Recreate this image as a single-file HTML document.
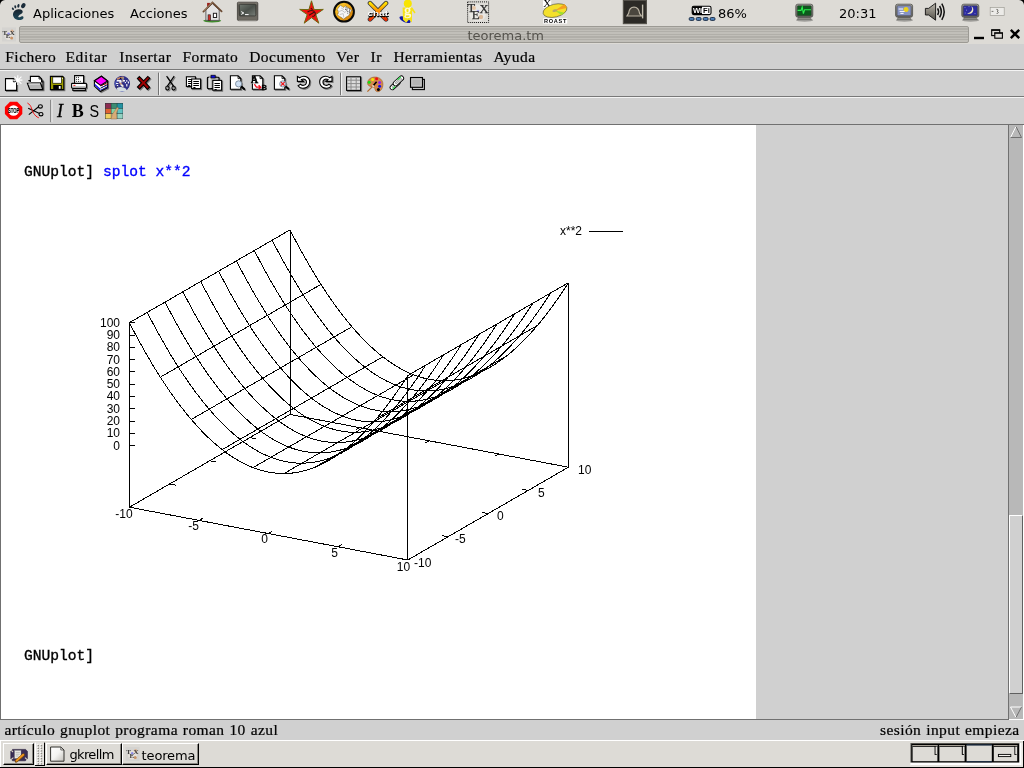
<!DOCTYPE html><html lang="es"><head><meta charset="utf-8"><title>teorema.tm</title><style>
*{margin:0;padding:0;box-sizing:border-box}
html,body{width:1024px;height:768px;overflow:hidden;background:#d0d0d0}
body{position:relative;font-family:"DejaVu Sans",sans-serif;font-size:13px;color:#000}
#w{position:absolute;left:0;top:0;width:1024px;height:768px;will-change:transform;overflow:hidden}
.a{position:absolute}
.t{position:absolute;white-space:pre;line-height:1}
#panel{left:0;top:0;width:1024px;height:44px;background:#dddbd6}
#stripes{left:19px;top:26px;width:950px;height:17px;border-radius:2px;border:1px solid #9c9a94;
 background:repeating-linear-gradient(to bottom,#c1bfb9 0,#c1bfb9 1.3px,#b1afa9 1.4px,#b1afa9 2.6px,#c1bfb9 2.67px)}
.serif{font-family:"Liberation Serif",serif;font-size:15.5px;-webkit-text-stroke:0.22px #000}
.mono{font-family:"Liberation Mono",monospace;font-size:14.6px}
.hl{position:absolute;left:0;width:1024px;height:1px}
#doc{left:1px;top:125px;width:755px;height:594px;background:#fff}
#sbar{left:1009px;top:125px;width:14px;height:594px;background:#b8b8b8}
#thumb{left:1009px;top:515px;width:14px;height:179px;background:#d0d0d0;border-top:1px solid #fff;border-left:1px solid #fff;border-right:1px solid #606060;border-bottom:1px solid #606060}
#bpanel{left:0;top:740px;width:1024px;height:28px;background:#dddbd6;border-top:1px solid #fff}
.btn{position:absolute;top:743px;height:22px;background:#dddbd6;border-top:1px solid #fff;border-left:1px solid #fff;border-right:1px solid #000;border-bottom:1px solid #000;box-shadow:inset -1px -1px 0 #8a8882}
</style></head><body><div id="w">
<div class="a" id="panel"></div>
<div class="t" style="left:33px;top:7px">Aplicaciones</div>
<div class="t" style="left:130px;top:7px">Acciones</div>
<div class="t" style="left:718px;top:7px">86%</div>
<div class="t" style="left:839px;top:7px">20:31</div>
<div class="a" id="stripes"></div>
<div class="t" style="left:467.4px;top:28.8px;color:#55534d">teorema.tm</div>
<div class="t serif" style="left:5.2px;top:48.5px;letter-spacing:0.53px">Fichero</div>
<div class="t serif" style="left:65.4px;top:48.5px;letter-spacing:0.7px">Editar</div>
<div class="t serif" style="left:119.2px;top:48.5px;letter-spacing:0.61px">Insertar</div>
<div class="t serif" style="left:182.4px;top:48.5px;letter-spacing:0.49px">Formato</div>
<div class="t serif" style="left:249.2px;top:48.5px;letter-spacing:0.48px">Documento</div>
<div class="t serif" style="left:336px;top:48.5px;letter-spacing:0.7px">Ver</div>
<div class="t serif" style="left:370.4px;top:48.5px;letter-spacing:0.7px">Ir</div>
<div class="t serif" style="left:393.4px;top:48.5px;letter-spacing:0.46px">Herramientas</div>
<div class="t serif" style="left:493.4px;top:48.5px;letter-spacing:0.45px">Ayuda</div>
<div class="hl" style="top:69px;background:#787878"></div><div class="hl" style="top:70px;background:#f4f4f4"></div>
<div class="hl" style="top:96px;background:#787878"></div><div class="hl" style="top:97px;background:#f4f4f4"></div>
<div class="hl" style="top:124px;background:#707070"></div>
<div class="a" style="left:0;top:125px;width:1px;height:594px;background:#707070"></div>
<div class="a" id="doc"></div>
<div class="t mono" style="left:24px;top:165px"><b style="font-weight:normal;-webkit-text-stroke:0.35px #000">GNUplot]</b></div>
<div class="t mono" style="left:103px;top:165px;color:#0000ff;-webkit-text-stroke:0.35px #0000ff">splot x**2</div>
<div class="t mono" style="left:24px;top:649px;-webkit-text-stroke:0.35px #000">GNUplot]</div>
<svg class="a" style="left:0;top:125px" width="756" height="594" viewBox="0 125 756 594"><path d="M129.4 507.2L407.8 560M407.8 560L568.4 467.2M568.4 467.2L290 414.4M290 414.4L129.4 507.2M129.4 507.2L129.4 322.7M407.8 560L407.8 375.5M568.4 467.2L568.4 282.7M290 414.4L290 229.9M129.4 322.7L290 229.9M160.3 377.2L320.9 284.4M191.3 419.5L351.9 326.7M222.2 449.6L382.8 356.8M253.1 467.6L413.7 374.8M284.1 473.5L444.7 380.7M315 467.2L475.6 374.4M345.9 448.8L506.5 356M376.9 418.2L537.5 325.4M407.8 375.5L568.4 282.7M129.4 322.7L134 331.6L138.7 340.3L143.3 348.7L148 356.8L152.6 364.7L157.2 372.3L161.9 379.6L166.5 386.6L171.2 393.4L175.8 399.8L180.4 406L185.1 412L189.7 417.6L194.4 423L199 428.1L203.6 433L208.3 437.6L212.9 441.9L217.6 445.9L222.2 449.6L226.8 453.1L231.5 456.3L236.1 459.2L240.8 461.9L245.4 464.3L250 466.4L254.7 468.2L259.3 469.8L264 471.1L268.6 472.1L273.2 472.8L277.9 473.3L282.5 473.5L287.2 473.4L291.8 473.1L296.4 472.5L301.1 471.6L305.7 470.4L310.4 468.9L315 467.2L319.6 465.2L324.3 463L328.9 460.4L333.6 457.6L338.2 454.5L342.8 451.2L347.5 447.6L352.1 443.7L356.8 439.5L361.4 435L366 430.3L370.7 425.3L375.3 420L380 414.5L384.6 408.7L389.2 402.6L393.9 396.2L398.5 389.6L403.2 382.7L407.8 375.5M147.2 312.4L151.9 321.3L156.5 330L161.2 338.4L165.8 346.5L170.4 354.4L175.1 361.9L179.7 369.3L184.4 376.3L189 383L193.6 389.5L198.3 395.7L202.9 401.7L207.6 407.3L212.2 412.7L216.8 417.8L221.5 422.7L226.1 427.3L230.8 431.5L235.4 435.6L240 439.3L244.7 442.8L249.3 446L254 448.9L258.6 451.6L263.2 454L267.9 456.1L272.5 457.9L277.2 459.5L281.8 460.8L286.4 461.8L291.1 462.5L295.7 463L300.4 463.2L305 463.1L309.6 462.8L314.3 462.1L318.9 461.3L323.6 460.1L328.2 458.6L332.8 456.9L337.5 454.9L342.1 452.7L346.8 450.1L351.4 447.3L356 444.2L360.7 440.9L365.3 437.3L370 433.3L374.6 429.2L379.2 424.7L383.9 420L388.5 415L393.2 409.7L397.8 404.2L402.4 398.4L407.1 392.3L411.7 385.9L416.4 379.3L421 372.4L425.6 365.2M165.1 302.1L169.7 311L174.4 319.7L179 328.1L183.6 336.2L188.3 344.1L192.9 351.6L197.6 358.9L202.2 366L206.8 372.7L211.5 379.2L216.1 385.4L220.8 391.4L225.4 397L230 402.4L234.7 407.5L239.3 412.4L244 416.9L248.6 421.2L253.2 425.3L257.9 429L262.5 432.5L267.2 435.7L271.8 438.6L276.4 441.3L281.1 443.7L285.7 445.8L290.4 447.6L295 449.2L299.6 450.5L304.3 451.5L308.9 452.2L313.6 452.7L318.2 452.9L322.8 452.8L327.5 452.5L332.1 451.8L336.8 450.9L341.4 449.8L346 448.3L350.7 446.6L355.3 444.6L360 442.4L364.6 439.8L369.2 437L373.9 433.9L378.5 430.6L383.2 426.9L387.8 423L392.4 418.9L397.1 414.4L401.7 409.7L406.4 404.7L411 399.4L415.6 393.9L420.3 388.1L424.9 382L429.6 375.6L434.2 369L438.8 362.1L443.5 354.9M182.9 291.8L187.6 300.7L192.2 309.4L196.9 317.8L201.5 325.9L206.1 333.7L210.8 341.3L215.4 348.6L220.1 355.7L224.7 362.4L229.3 368.9L234 375.1L238.6 381L243.3 386.7L247.9 392.1L252.5 397.2L257.2 402.1L261.8 406.6L266.5 410.9L271.1 414.9L275.7 418.7L280.4 422.2L285 425.4L289.7 428.3L294.3 431L298.9 433.4L303.6 435.5L308.2 437.3L312.9 438.9L317.5 440.2L322.1 441.2L326.8 441.9L331.4 442.4L336.1 442.6L340.7 442.5L345.3 442.1L350 441.5L354.6 440.6L359.3 439.5L363.9 438L368.5 436.3L373.2 434.3L377.8 432L382.5 429.5L387.1 426.7L391.7 423.6L396.4 420.3L401 416.6L405.7 412.7L410.3 408.6L414.9 404.1L419.6 399.4L424.2 394.4L428.9 389.1L433.5 383.6L438.1 377.8L442.8 371.7L447.4 365.3L452.1 358.7L456.7 351.8L461.3 344.6M200.8 281.5L205.4 290.4L210.1 299.1L214.7 307.5L219.3 315.6L224 323.4L228.6 331L233.3 338.3L237.9 345.3L242.5 352.1L247.2 358.6L251.8 364.8L256.5 370.7L261.1 376.4L265.7 381.8L270.4 386.9L275 391.7L279.7 396.3L284.3 400.6L288.9 404.6L293.6 408.4L298.2 411.9L302.9 415.1L307.5 418L312.1 420.7L316.8 423L321.4 425.1L326.1 427L330.7 428.5L335.3 429.8L340 430.9L344.6 431.6L349.3 432.1L353.9 432.3L358.5 432.2L363.2 431.8L367.8 431.2L372.5 430.3L377.1 429.1L381.7 427.7L386.4 426L391 424L395.7 421.7L400.3 419.2L404.9 416.4L409.6 413.3L414.2 409.9L418.9 406.3L423.5 402.4L428.1 398.2L432.8 393.8L437.4 389.1L442.1 384.1L446.7 378.8L451.3 373.3L456 367.4L460.6 361.3L465.3 355L469.9 348.3L474.5 341.4L479.2 334.3M218.6 271.1L223.3 280.1L227.9 288.8L232.5 297.2L237.2 305.3L241.8 313.1L246.5 320.7L251.1 328L255.7 335L260.4 341.8L265 348.3L269.7 354.5L274.3 360.4L278.9 366.1L283.6 371.5L288.2 376.6L292.9 381.4L297.5 386L302.1 390.3L306.8 394.3L311.4 398.1L316.1 401.6L320.7 404.8L325.3 407.7L330 410.3L334.6 412.7L339.3 414.8L343.9 416.7L348.5 418.2L353.2 419.5L357.8 420.5L362.5 421.3L367.1 421.8L371.7 422L376.4 421.9L381 421.5L385.7 420.9L390.3 420L394.9 418.8L399.6 417.4L404.2 415.7L408.9 413.7L413.5 411.4L418.1 408.9L422.8 406.1L427.4 403L432.1 399.6L436.7 396L441.3 392.1L446 387.9L450.6 383.5L455.3 378.8L459.9 373.8L464.5 368.5L469.2 362.9L473.8 357.1L478.5 351L483.1 344.7L487.7 338L492.4 331.1L497 323.9M236.5 260.8L241.1 269.8L245.7 278.4L250.4 286.8L255 295L259.7 302.8L264.3 310.4L268.9 317.7L273.6 324.7L278.2 331.5L282.9 338L287.5 344.2L292.1 350.1L296.8 355.8L301.4 361.2L306.1 366.3L310.7 371.1L315.3 375.7L320 380L324.6 384L329.3 387.8L333.9 391.2L338.5 394.4L343.2 397.4L347.8 400L352.5 402.4L357.1 404.5L361.7 406.4L366.4 407.9L371 409.2L375.7 410.2L380.3 411L384.9 411.4L389.6 411.6L394.2 411.6L398.9 411.2L403.5 410.6L408.1 409.7L412.8 408.5L417.4 407.1L422.1 405.4L426.7 403.4L431.3 401.1L436 398.6L440.6 395.8L445.3 392.7L449.9 389.3L454.5 385.7L459.2 381.8L463.8 377.6L468.5 373.2L473.1 368.4L477.7 363.4L482.4 358.2L487 352.6L491.7 346.8L496.3 340.7L500.9 334.4L505.6 327.7L510.2 320.8L514.9 313.6M254.3 250.5L259 259.5L263.6 268.1L268.2 276.5L272.9 284.7L277.5 292.5L282.2 300.1L286.8 307.4L291.4 314.4L296.1 321.2L300.7 327.7L305.4 333.9L310 339.8L314.6 345.5L319.3 350.9L323.9 356L328.6 360.8L333.2 365.4L337.8 369.7L342.5 373.7L347.1 377.5L351.8 380.9L356.4 384.1L361 387.1L365.7 389.7L370.3 392.1L375 394.2L379.6 396.1L384.2 397.6L388.9 398.9L393.5 399.9L398.2 400.7L402.8 401.1L407.4 401.3L412.1 401.3L416.7 400.9L421.4 400.3L426 399.4L430.6 398.2L435.3 396.8L439.9 395.1L444.6 393.1L449.2 390.8L453.8 388.3L458.5 385.5L463.1 382.4L467.8 379L472.4 375.4L477 371.5L481.7 367.3L486.3 362.9L491 358.1L495.6 353.1L500.2 347.9L504.9 342.3L509.5 336.5L514.2 330.4L518.8 324.1L523.4 317.4L528.1 310.5L532.7 303.3M272.2 240.2L276.8 249.2L281.4 257.8L286.1 266.2L290.7 274.3L295.4 282.2L300 289.8L304.6 297.1L309.3 304.1L313.9 310.9L318.6 317.3L323.2 323.6L327.8 329.5L332.5 335.2L337.1 340.5L341.8 345.7L346.4 350.5L351 355.1L355.7 359.4L360.3 363.4L365 367.1L369.6 370.6L374.2 373.8L378.9 376.8L383.5 379.4L388.2 381.8L392.8 383.9L397.4 385.7L402.1 387.3L406.7 388.6L411.4 389.6L416 390.4L420.6 390.8L425.3 391L429.9 390.9L434.6 390.6L439.2 390L443.8 389.1L448.5 387.9L453.1 386.5L457.8 384.7L462.4 382.8L467 380.5L471.7 378L476.3 375.1L481 372.1L485.6 368.7L490.2 365.1L494.9 361.2L499.5 357L504.2 352.5L508.8 347.8L513.4 342.8L518.1 337.6L522.7 332L527.4 326.2L532 320.1L536.6 313.7L541.3 307.1L545.9 300.2L550.6 293M290 229.9L294.6 238.8L299.3 247.5L303.9 255.9L308.6 264L313.2 271.9L317.8 279.5L322.5 286.8L327.1 293.8L331.8 300.6L336.4 307L341 313.2L345.7 319.2L350.3 324.8L355 330.2L359.6 335.3L364.2 340.2L368.9 344.8L373.5 349.1L378.2 353.1L382.8 356.8L387.4 360.3L392.1 363.5L396.7 366.4L401.4 369.1L406 371.5L410.6 373.6L415.3 375.4L419.9 377L424.6 378.3L429.2 379.3L433.8 380L438.5 380.5L443.1 380.7L447.8 380.6L452.4 380.3L457 379.7L461.7 378.8L466.3 377.6L471 376.1L475.6 374.4L480.2 372.4L484.9 370.2L489.5 367.6L494.2 364.8L498.8 361.7L503.4 358.4L508.1 354.8L512.7 350.9L517.4 346.7L522 342.2L526.6 337.5L531.3 332.5L535.9 327.2L540.6 321.7L545.2 315.9L549.8 309.8L554.5 303.4L559.1 296.8L563.8 289.9L568.4 282.7M129.4 507.2L133 505.1M290 414.4L286.4 416.5M407.8 560L401.5 558.8M129.4 507.2L135.7 508.4M199 520.4L202.6 518.3M359.6 427.6L356 429.7M447.9 536.8L441.7 535.6M169.6 484L175.8 485.2M268.6 533.6L272.2 531.5M429.2 440.8L425.6 442.9M488.1 513.6L481.8 512.4M209.7 460.8L216 462M338.2 546.8L341.8 544.7M498.8 454L495.2 456.1M528.2 490.4L522 489.2M249.8 437.6L256.1 438.8M407.8 560L411.4 557.9M568.4 467.2L564.8 469.3M568.4 467.2L562.1 466M290 414.4L296.3 415.6M129.4 445.7L135.4 445.7M129.4 433.4L135.4 433.4M129.4 421.1L135.4 421.1M129.4 408.8L135.4 408.8M129.4 396.5L135.4 396.5M129.4 384.2L135.4 384.2M129.4 371.9L135.4 371.9M129.4 359.6L135.4 359.6M129.4 347.3L135.4 347.3M129.4 335L135.4 335M129.4 322.7L135.4 322.7M589 231L623 231" fill="none" stroke="#000" stroke-width="1" shape-rendering="crispEdges"/>
<g font-family="'Liberation Sans',sans-serif" font-size="12" fill="#000"><text x="120" y="449.6" text-anchor="end">0</text><text x="120" y="437.3" text-anchor="end">10</text><text x="120" y="425" text-anchor="end">20</text><text x="120" y="412.7" text-anchor="end">30</text><text x="120" y="400.4" text-anchor="end">40</text><text x="120" y="388.1" text-anchor="end">50</text><text x="120" y="375.8" text-anchor="end">60</text><text x="120" y="363.5" text-anchor="end">70</text><text x="120" y="351.2" text-anchor="end">80</text><text x="120" y="338.9" text-anchor="end">90</text><text x="120" y="326.6" text-anchor="end">100</text><text x="124" y="518.2" text-anchor="middle">-10</text><text x="193.5" y="530.2" text-anchor="middle">-5</text><text x="264.5" y="543.2" text-anchor="middle">0</text><text x="334.5" y="557.2" text-anchor="middle">5</text><text x="403.5" y="571.2" text-anchor="middle">10</text><text x="414" y="567.2">-10</text><text x="455" y="543.2">-5</text><text x="497" y="520.2">0</text><text x="538" y="497.2">5</text><text x="578" y="474.2">10</text><text x="560" y="235">x**2</text></g></svg>
<div class="a" style="left:1008px;top:125px;width:1px;height:594px;background:#707070"></div>
<div class="a" id="sbar"></div><div class="a" style="left:1023px;top:125px;width:1px;height:595px;background:#fff"></div>
<div class="a" id="thumb"></div>
<svg class="a" style="left:1009px;top:125px" width="14" height="594"><path d="M1.5 12.5L7 1.5" stroke="#fff" fill="none"/><path d="M7 1.5L12.5 12.5L1.5 12.5" stroke="#707070" fill="none"/><path d="M12.5 582L1.5 582L7 592.5" stroke="#fff" fill="none"/><path d="M7 592.5L12.5 582" stroke="#707070" fill="none"/></svg>
<div class="hl" style="top:719px;background:#707070;width:1009px"></div><div class="a" style="left:1009px;top:719px;width:15px;height:1px;background:#fff"></div>
<div class="t serif" style="left:4.4px;top:722.4px;letter-spacing:0.42px;word-spacing:0.6px">artículo gnuplot programa roman 10 azul</div>
<div class="t serif" style="right:4.4px;top:722.4px;letter-spacing:0.42px;word-spacing:0.6px">sesión input empieza</div>
<div class="a" id="bpanel"></div>
<div class="btn" style="left:3px;width:31px"></div>
<div class="btn" style="left:45.5px;width:76px"></div>
<div class="btn" style="left:121.8px;width:77.4px"></div>
<div class="t" style="left:69.4px;top:748.4px;letter-spacing:-0.62px">gkrellm</div>
<div class="t" style="left:141.6px;top:748.8px;letter-spacing:-0.15px">teorema</div>
<svg class="a" style="left:0;top:0;pointer-events:none" width="1024" height="768" viewBox="0 0 1024 768"><path d="M0 0H5Q0.5 0.5 0 5Z" fill="#000"/><path d="M1024 0H1019Q1023.5 0.5 1024 5Z" fill="#000"/><g fill="#1b2c3a"><ellipse cx="23.3" cy="5.6" rx="2" ry="2.7" transform="rotate(28 23.3 5.6)"/><ellipse cx="18.4" cy="5.8" rx="1.1" ry="1.9" transform="rotate(10 18.4 5.8)"/><ellipse cx="15.3" cy="6.8" rx="0.95" ry="1.6" transform="rotate(-12 15.3 6.8)"/><ellipse cx="12.9" cy="8.8" rx="0.9" ry="1.4" transform="rotate(-32 12.9 8.8)"/></g><defs><linearGradient id="gf" x1="0" y1="0" x2="0" y2="1"><stop offset="0" stop-color="#17222c"/><stop offset="1" stop-color="#1e4a5c"/></linearGradient></defs><path d="M18.2 9.2C21.5 8.9 23.3 10.6 22.6 12.6C22 14.3 19.2 14.6 18.4 16.2C17.9 17.3 19.2 17.7 20.3 16.9C21.5 16 23.4 16.1 23.5 17.4C23.6 19.2 20.8 20.3 18.3 20.1C14.9 19.8 12.8 17 13 14.1C13.2 11.3 15.4 9.4 18.2 9.2Z" fill="url(#gf)"/><ellipse cx="212.2" cy="20.8" rx="9" ry="1.6" fill="#3f8a2c"/><rect x="207.1" y="2.9" width="2.8" height="4.5" fill="#9c1f1a"/><path d="M205.9 20.4V10L212.4 3.6L219.2 10V20.4Z" fill="#e4e4e4" stroke="#555" stroke-width="0.9"/><path d="M203.4 11.6L212.4 2.6L221.6 11.4" fill="none" stroke="#6b4a33" stroke-width="1.8" stroke-linecap="round"/><path d="M203.6 11L212.4 2.2" fill="none" stroke="#c9a98c" stroke-width="0.7"/><rect x="208" y="14.8" width="2.6" height="5.6" fill="#c8302a" stroke="#222" stroke-width="0.6"/><rect x="213.4" y="13.3" width="3.2" height="4.2" fill="#fff" stroke="#222" stroke-width="1"/><defs><linearGradient id="tf" x1="0" y1="0" x2="0" y2="1"><stop offset="0" stop-color="#8c887e"/><stop offset="0.15" stop-color="#5f5c55"/><stop offset="1" stop-color="#6f6c64"/></linearGradient><linearGradient id="ts" x1="0" y1="0" x2="1" y2="1"><stop offset="0" stop-color="#707870"/><stop offset="0.5" stop-color="#4a504a"/><stop offset="1" stop-color="#7a807a"/></linearGradient></defs><rect x="237.4" y="2.2" width="20.4" height="18.2" rx="1" fill="url(#tf)" stroke="#3c3a36" stroke-width="0.8"/><rect x="239.4" y="4.3" width="16.4" height="11.6" rx="1" fill="url(#ts)" stroke="#2e2e2a" stroke-width="0.7"/><path d="M241.2 11.6L243.8 13L241.2 14.4M245 14.6H248.6" fill="none" stroke="#fff" stroke-width="1"/><rect x="238.6" y="20.4" width="18" height="1" fill="#a8a6a0"/><polygon points="311.5,0.8 314.1,9.6 323.3,9.4 315.8,14.6 318.8,23.2 311.5,17.7 304.2,23.2 307.2,14.6 299.7,9.4 308.9,9.6" fill="#f01010" stroke="#6e6a10" stroke-width="1"/><path d="M307.5 12.2C310 9.8 313.5 10 315 12.5C316 14.5 314.5 16.6 312.4 16.4M309 15.2L314.5 12M310.8 8.2L312.6 9.6" fill="none" stroke="#40100c" stroke-width="1.1"/><defs><linearGradient id="orb" x1="0" y1="0" x2="1" y2="1"><stop offset="0" stop-color="#ffd83a"/><stop offset="0.5" stop-color="#f0a818"/><stop offset="1" stop-color="#c87000"/></linearGradient></defs><circle cx="344" cy="11.7" r="9.9" fill="url(#orb)" stroke="#0a0a0a" stroke-width="2"/><path d="M337.3 9.4L340.3 5.2L343.75 7.5L345.3 5.9L351.6 10L348.75 15.6L346.9 16.6L343.75 19.1L337.5 15L338.6 12Z" fill="#f6f6f6" stroke="#3a3a30" stroke-width="0.6" stroke-dasharray="0.9 0.7"/><path d="M338.6 11.6L342 10.4L345 12.6L347.6 9M339.6 14.6L343.2 13.6L343.8 17.6M341.2 8L344 9.6" fill="none" stroke="#b8b8b8" stroke-width="0.8"/><path d="M345.6 7.4h.9m.9 .8h.9m-2.6 .9h.9m2.7 0h.9m-3.7 1h.9m1.8 .2h.9m-2.8 1.2h.9m1 .9h.9m-2.8 .8h.9M345 9.4h.9m2.9 2h.9" stroke="#2e2e2e" stroke-width="0.8" fill="none"/><defs><linearGradient id="xc" x1="0" y1="0" x2="0" y2="1"><stop offset="0" stop-color="#ffe000"/><stop offset="0.5" stop-color="#ff8c00"/><stop offset="1" stop-color="#ee2a00"/></linearGradient></defs><path d="M370 3.2L386 19.4M386 3.2L370 19.4" stroke="#3a3a3a" stroke-width="4.6" stroke-linecap="round" fill="none"/><path d="M370 3.2L386 19.4M386 3.2L370 19.4" stroke="url(#xc)" stroke-width="3" stroke-linecap="round" fill="none"/><text x="367.9" y="16.6" font-family="'Liberation Sans',sans-serif" font-size="7.2" font-weight="bold" fill="#000" stroke="#000" stroke-width="0.5" textLength="20.6" lengthAdjust="spacingAndGlyphs">chat</text><text x="367.4" y="15.6" font-family="'Liberation Sans',sans-serif" font-size="7.2" font-weight="bold" fill="#fff" textLength="20.6" lengthAdjust="spacingAndGlyphs">chat</text><ellipse cx="405" cy="19.6" rx="6" ry="2.6" fill="#1018a8" transform="rotate(25 405 19.6)"/><path d="M402.6 7.6H412.4L415.6 12.4L414.6 13.4L412 10.6V22.4L409 19.6L406.2 22.8L403 19.8Z" fill="#f6e218"/><circle cx="407.8" cy="3.6" r="4" fill="#f8e400"/><text x="404" y="14.6" font-family="'Liberation Serif',serif" font-size="14.5" fill="#fffbe0" stroke="#fffbe0" stroke-width="0.3">g</text><circle cx="477.6" cy="13" r="8.6" fill="#ecebe8" opacity="0.75"/><rect x="467.6" y="1.9" width="21" height="20.6" fill="none" stroke="#111" stroke-width="1" stroke-dasharray="1 1.05"/><circle cx="474" cy="8" r="2" fill="#e8c8a8"/><circle cx="481" cy="17" r="2.2" fill="#dcb898"/><circle cx="478" cy="11" r="1.3" fill="#a8a8f0"/><g font-family="'Liberation Serif',serif" fill="#2c2c2c" stroke="#2c2c2c" stroke-width="0.25"><text x="467.4" y="12.4" font-size="12.5">T</text><text x="471.8" y="18.8" font-size="13">E</text><text x="479.6" y="13.4" font-size="12.5">X</text></g><rect x="543" y="0" width="8.2" height="7.8" fill="#fff"/><text x="543.2" y="7.2" font-family="'Liberation Serif',serif" font-size="11" fill="#000">X</text><g transform="rotate(-14 555 10.6)"><ellipse cx="555" cy="10.6" rx="12.2" ry="6.4" fill="#f4e02c" stroke="#3a3a20" stroke-width="0.5"/><path d="M555 10.6L566 6.6L567 11Z" fill="#f6a020"/><path d="M555 10.6L560 16.4L564 15Z" fill="#a0e030"/><ellipse cx="555" cy="10.6" rx="2.6" ry="1.3" fill="#b8a868"/></g><rect x="543.2" y="18.2" width="24" height="5.4" fill="#fff"/><text x="544" y="23" font-family="'Liberation Sans',sans-serif" font-size="5.6" font-weight="bold" fill="#000" textLength="22.4" lengthAdjust="spacing">ROAST</text><rect x="623.4" y="0.2" width="23" height="23.4" fill="#2c2a26" stroke="#55534c" stroke-width="1.2"/><path d="M628.6 13.4C629.5 5.2 638.4 5 639.6 13.4L641.4 16H627Z" fill="#4a463e" stroke="#b9b2a2" stroke-width="1.2"/><path d="M642.6 4.6V18.4" stroke="#c4beb0" stroke-width="1.4"/><rect x="692.2" y="6.2" width="18.8" height="8.4" rx="1.6" fill="#fff" stroke="#000" stroke-width="1.1"/><path d="M693.8 6.2H702V14.6H693.8Q692.2 14.6 692.2 13V7.8Q692.2 6.2 693.8 6.2Z" fill="#000"/><text x="693" y="13.4" font-family="'Liberation Sans',sans-serif" font-size="7.6" font-weight="bold" fill="#fff">Wi</text><text x="703" y="13.4" font-family="'Liberation Sans',sans-serif" font-size="7.6" font-weight="bold" fill="#000">Fi</text><rect x="689.2" y="17.5" width="4.9" height="2.9" rx="1.2" fill="#4f82bc" stroke="#14243a" stroke-width="0.9"/><rect x="696.2" y="17.5" width="4.9" height="2.9" rx="1.2" fill="#4f82bc" stroke="#14243a" stroke-width="0.9"/><rect x="703.2" y="17.5" width="4.9" height="2.9" rx="1.2" fill="#4f82bc" stroke="#14243a" stroke-width="0.9"/><rect x="710.1" y="17.5" width="4.9" height="2.9" rx="1.2" fill="#4f82bc" stroke="#14243a" stroke-width="0.9"/><defs><linearGradient id="mf" x1="0" y1="0" x2="0" y2="1"><stop offset="0" stop-color="#b0b0aa"/><stop offset="0.25" stop-color="#8a8a84"/><stop offset="1" stop-color="#6a6a66"/></linearGradient></defs><ellipse cx="804.5999999999999" cy="20.2" rx="8.6" ry="1.6" fill="#000" opacity="0.28"/><path d="M798.8 16.8H809.8L811.4 19.6H797.1999999999999Z" fill="#8c8c86" stroke="#5a5a56" stroke-width="0.5"/><rect x="795.8" y="4.2" width="17" height="13" rx="2" fill="url(#mf)" stroke="#4e4e4a" stroke-width="0.8"/><rect x="797.3" y="5.7" width="14" height="10" rx="0.8" fill="#0c5a1c" stroke="#3a3a38" stroke-width="0.5"/><path d="M797.5 10.4H801L802.2 7L803.4 13.6L804.6 9.8H811" fill="none" stroke="#2cf050" stroke-width="1.1"/><ellipse cx="904.4" cy="20.2" rx="8.6" ry="1.6" fill="#000" opacity="0.28"/><path d="M898.6 16.8H909.6L911.2 19.6H897.0Z" fill="#8c8c86" stroke="#5a5a56" stroke-width="0.5"/><rect x="895.6" y="4.2" width="17" height="13" rx="2" fill="url(#mf)" stroke="#4e4e4a" stroke-width="0.8"/><rect x="897.1" y="5.7" width="14" height="10" rx="0.8" fill="#8794c4" stroke="#3a3a38" stroke-width="0.5"/><circle cx="906" cy="9.6" r="2.5" fill="#ecd21c"/><path d="M898.6 9H903M899.6 11.4H904.6M900.4 13.4H903.6" stroke="#fff" stroke-width="1"/><defs><linearGradient id="sp" x1="0" y1="0" x2="0" y2="1"><stop offset="0" stop-color="#b8b4aa"/><stop offset="1" stop-color="#55524a"/></linearGradient></defs><path d="M925.4 8.4H928.6L935.6 3.2V20.2L928.6 15H925.4Z" fill="url(#sp)" stroke="#111" stroke-width="0.9" stroke-linejoin="round"/><path d="M937.6 8.4Q939.6 11.7 937.6 15M939.6 6Q943 11.7 939.6 17.4M941.8 3.6Q946.6 11.7 941.8 19.8" fill="none" stroke="#111" stroke-width="1.5"/><ellipse cx="970.5999999999999" cy="20.2" rx="8.6" ry="1.6" fill="#000" opacity="0.28"/><path d="M964.8 16.8H975.8L977.4 19.6H963.1999999999999Z" fill="#8c8c86" stroke="#5a5a56" stroke-width="0.5"/><rect x="961.8" y="4.2" width="17" height="13" rx="2" fill="url(#mf)" stroke="#4e4e4a" stroke-width="0.8"/><rect x="963.3" y="5.7" width="14" height="10" rx="0.8" fill="#2c2ca0" stroke="#3a3a38" stroke-width="0.5"/><path d="M971.4 6.2A3.7 3.7 0 1 1 967 13.2A4.6 4.6 0 0 0 971.4 6.2Z" fill="#f4ecc4"/><path d="M964.6 7.4h0.8M966.2 10.2h0.8M964.8 13h0.8M968.6 6.6h0.8M974.6 13.6h0.8" stroke="#c8c8f0" stroke-width="0.7"/><rect x="990.2" y="7.6" width="14" height="7.8" fill="#ecebe8" stroke="#a09e98" stroke-width="0.7"/><path d="M991.6 11.4H993.4M996.4 9.4C998.4 9 998.6 11 997 11.4C999 11.8 998.6 13.8 996.6 13.4" fill="none" stroke="#55534e" stroke-width="0.8"/><g transform="translate(2 27.4)"><rect x="0" y="0" width="14" height="14" fill="#d4d3d0"/><g style="filter:blur(0.45px)"><circle cx="7" cy="8" r="4.6" fill="#e6e2dc"/><circle cx="10" cy="3.6" r="1.6" fill="#d8b090"/><circle cx="9.6" cy="10.6" r="1.5" fill="#c89468"/><circle cx="6.6" cy="6.2" r="1.2" fill="#8a8ae8"/><g font-family="'Liberation Serif',serif" font-weight="bold" fill="#3c3c3c"><text x="0.6" y="7.4" font-size="7">T</text><text x="3.8" y="10.8" font-size="7">E</text><text x="7.8" y="7.4" font-size="7">X</text></g></g></g><rect x="974" y="36.8" width="10" height="2.4" fill="#000"/><rect x="991.7" y="30.2" width="8" height="5.4" fill="none" stroke="#000" stroke-width="1.1"/><rect x="991.2" y="29.2" width="9" height="1.4" fill="#000"/><rect x="994.8" y="33" width="7.6" height="5.2" fill="#dddbd6" stroke="#000" stroke-width="1.1"/><rect x="994.2" y="32.4" width="8.8" height="1.2" fill="#000"/><path d="M1010.8 29.8L1019.2 38.2M1019.2 29.8L1010.8 38.2" stroke="#000" stroke-width="2.4" fill="none"/><g transform="translate(1 1)" opacity="0.42" style="filter:brightness(0)"><path d="M5.5 78.6H13.4L16.6 81.8V90.4H5.5Z" fill="#fff" stroke="#000" stroke-width="1.1" stroke-linejoin="miter"/><path d="M13.4 78.6V81.8H16.6" fill="none" stroke="#000" stroke-width="0.9"/></g><path d="M5.5 78.6H13.4L16.6 81.8V90.4H5.5Z" fill="#fff" stroke="#000" stroke-width="1.1" stroke-linejoin="miter"/><path d="M13.4 78.6V81.8H16.6" fill="none" stroke="#000" stroke-width="0.9"/><path d="M17.8 75.2V85M13.2 80.1H22.4M14.4 76.6L21.4 83.8M21.4 76.6L14.4 83.8" stroke="#fff" stroke-width="1.1" fill="none"/><circle cx="17.8" cy="80.1" r="1.6" fill="#fff"/><g transform="translate(1 1)" opacity="0.42" style="filter:brightness(0)"><path d="M30.4 82V76.4H39L41.6 79V82" fill="#fff" stroke="#000" stroke-width="1.1" stroke-linejoin="miter"/><path d="M39 76.4V79H41.6" fill="none" stroke="#000" stroke-width="0.8"/><path d="M28.4 80.6H30.6M41 81H43V89.4" fill="none" stroke="#000" stroke-width="1.1"/><path d="M27.4 83.2H40.6L42.8 89.6H29.8Z" fill="#b4b4b4" stroke="#000" stroke-width="1.1" stroke-linejoin="miter"/><path d="M28.4 83.9H40" stroke="#fff" stroke-width="0.9"/></g><path d="M30.4 82V76.4H39L41.6 79V82" fill="#fff" stroke="#000" stroke-width="1.1" stroke-linejoin="miter"/><path d="M39 76.4V79H41.6" fill="none" stroke="#000" stroke-width="0.8"/><path d="M28.4 80.6H30.6M41 81H43V89.4" fill="none" stroke="#000" stroke-width="1.1"/><path d="M27.4 83.2H40.6L42.8 89.6H29.8Z" fill="#b4b4b4" stroke="#000" stroke-width="1.1" stroke-linejoin="miter"/><path d="M28.4 83.9H40" stroke="#fff" stroke-width="0.9"/><g transform="translate(1 1)" opacity="0.42" style="filter:brightness(0)"><path d="M50.4 76.4H62.6L63.8 77.6V89.6H50.4Z" fill="#9c9c00" stroke="#000" stroke-width="1.1" stroke-linejoin="miter"/><rect x="52.8" y="77" width="8.6" height="6.2" fill="#fff" stroke="#000" stroke-width="0.6"/><rect x="53.2" y="85" width="8.6" height="4.4" fill="#000"/><rect x="58.8" y="86" width="1.8" height="2.8" fill="#fff"/><rect x="62" y="78.2" width="0.9" height="0.9" fill="#fff"/></g><path d="M50.4 76.4H62.6L63.8 77.6V89.6H50.4Z" fill="#9c9c00" stroke="#000" stroke-width="1.1" stroke-linejoin="miter"/><rect x="52.8" y="77" width="8.6" height="6.2" fill="#fff" stroke="#000" stroke-width="0.6"/><rect x="53.2" y="85" width="8.6" height="4.4" fill="#000"/><rect x="58.8" y="86" width="1.8" height="2.8" fill="#fff"/><rect x="62" y="78.2" width="0.9" height="0.9" fill="#fff"/><g transform="translate(1 1)" opacity="0.42" style="filter:brightness(0)"><path d="M74.6 83.4V75.6H83.6V83.4" fill="#fff" stroke="#000" stroke-width="1.1" stroke-linejoin="miter"/><path d="M76.2 77.4h0.9m0.9 0h0.9M76.2 79.4h0.9m0.9 0h0.9M76.2 81.4h0.9m0.9 0h0.9m0.9 0h0.9" stroke="#000" stroke-width="0.9"/><rect x="71.6" y="83.4" width="14.8" height="4.6" rx="0.6" fill="#fff" stroke="#000" stroke-width="1.1" stroke-linejoin="miter"/><rect x="72.6" y="86" width="12.8" height="1.6" fill="#c4c4c4"/><rect x="72.8" y="88.6" width="12.6" height="1.8" fill="#e8e8e8" stroke="#000" stroke-width="1.1" stroke-linejoin="miter"/><rect x="73.4" y="84.9" width="2" height="0.9" fill="#f01010"/></g><path d="M74.6 83.4V75.6H83.6V83.4" fill="#fff" stroke="#000" stroke-width="1.1" stroke-linejoin="miter"/><path d="M76.2 77.4h0.9m0.9 0h0.9M76.2 79.4h0.9m0.9 0h0.9M76.2 81.4h0.9m0.9 0h0.9m0.9 0h0.9" stroke="#000" stroke-width="0.9"/><rect x="71.6" y="83.4" width="14.8" height="4.6" rx="0.6" fill="#fff" stroke="#000" stroke-width="1.1" stroke-linejoin="miter"/><rect x="72.6" y="86" width="12.8" height="1.6" fill="#c4c4c4"/><rect x="72.8" y="88.6" width="12.6" height="1.8" fill="#e8e8e8" stroke="#000" stroke-width="1.1" stroke-linejoin="miter"/><rect x="73.4" y="84.9" width="2" height="0.9" fill="#f01010"/><g transform="translate(1 1)" opacity="0.42" style="filter:brightness(0)"><path d="M94.4 86.2L100.4 91.6L107.6 87.6V81L101.4 76.2L94.4 80.8Z" fill="#fff" stroke="#000" stroke-width="1.1" stroke-linejoin="miter"/><path d="M94.6 85.2L100.4 90.8V88.8L94.6 83.4Z" fill="#1010f0"/><path d="M100.6 86L107.4 82.4M100.6 88.2L107.4 84.6M100.6 90.4L107.4 86.8" stroke="#000" stroke-width="0.9"/><path d="M101.6 87.2h1.2m1.4-0.8h1.2m1.2-0.8h1M101.6 89.4h1.2m1.4-0.8h1.2m1.2-0.8h1" stroke="#1010f0" stroke-width="0.9"/><path d="M101.4 85.2h1.4m1.4-0.8h1.4m1-0.6h1" stroke="#f01010" stroke-width="1"/><path d="M94.4 80.8L101.4 76.2L107.6 81L100.6 85.4Z" fill="#ff00ff" stroke="#000" stroke-width="1.1" stroke-linejoin="miter"/></g><path d="M94.4 86.2L100.4 91.6L107.6 87.6V81L101.4 76.2L94.4 80.8Z" fill="#fff" stroke="#000" stroke-width="1.1" stroke-linejoin="miter"/><path d="M94.6 85.2L100.4 90.8V88.8L94.6 83.4Z" fill="#1010f0"/><path d="M100.6 86L107.4 82.4M100.6 88.2L107.4 84.6M100.6 90.4L107.4 86.8" stroke="#000" stroke-width="0.9"/><path d="M101.6 87.2h1.2m1.4-0.8h1.2m1.2-0.8h1M101.6 89.4h1.2m1.4-0.8h1.2m1.2-0.8h1" stroke="#1010f0" stroke-width="0.9"/><path d="M101.4 85.2h1.4m1.4-0.8h1.4m1-0.6h1" stroke="#f01010" stroke-width="1"/><path d="M94.4 80.8L101.4 76.2L107.6 81L100.6 85.4Z" fill="#ff00ff" stroke="#000" stroke-width="1.1" stroke-linejoin="miter"/><clipPath id="gc"><circle cx="122.1" cy="83.7" r="8"/></clipPath><g clip-path="url(#gc)" style="filter:blur(0.35px)"><circle cx="122.1" cy="83.7" r="8" fill="#2f2f88"/><path d="M114 84Q116 80 118 79L116 86Z" fill="#4a55b0"/><path d="M116.6 78.6Q119.6 76.2 123.4 76.8L123.2 78.6Q120 78.2 117.6 80Z" fill="#c8865e"/><path d="M122.4 76.6L124.2 76.8L123.2 82.6L122 82Z" fill="#a08c86"/><path d="M118.6 82.4L120.6 82L124 86.4L122.8 87Z" fill="#d09a78"/><path d="M116.8 80H121.4V81.4H116.8ZM123 80H125V81.4H123ZM126 80.2H127.4V81.4H126ZM124.8 82H126V83.2H124.8ZM127.8 81.4H129V83.4H127.8ZM116 83H118.4V84H116ZM119.4 81.6L121.6 81.2L121.8 82.6L119.6 82.8ZM116.8 85H118.2V86.2H116.8ZM126.2 84H127.4V86.6H126.2Z" fill="#f2f2f6"/><path d="M120.4 84.2L123.4 85L123 87L120.8 86Z" fill="#e8f0f0"/><path d="M120 77.8h1.2v1.2h-1.2zM116.6 86.4h1.4v1.2h-1.4z" fill="#101018"/><path d="M121.6 87L125.6 89.6L124.6 90.4L121 88Z" fill="#14141c"/><path d="M116.6 88Q122 85.6 126.4 89L125.8 92H118Z" fill="#d4dce0"/><path d="M119 91h6v1.2h-6z" fill="#6a78c0"/></g><g transform="translate(1 1)" opacity="0.42" style="filter:brightness(0)"><path d="M139.4 76.6L143.6 80.8L147.8 76.4L149.8 78.2L145.6 82.8L149.6 87.2L147.4 89.4L143.4 85L139.6 89L137.4 87L141.4 82.8L137.4 78.6Z" fill="#a00000" stroke="#000" stroke-width="1.1" stroke-linejoin="miter"/></g><path d="M139.4 76.6L143.6 80.8L147.8 76.4L149.8 78.2L145.6 82.8L149.6 87.2L147.4 89.4L143.4 85L139.6 89L137.4 87L141.4 82.8L137.4 78.6Z" fill="#a00000" stroke="#000" stroke-width="1.1" stroke-linejoin="miter"/><rect x="158.2" y="72.6" width="1" height="22.6" fill="#5c5c5c"/><rect x="159.2" y="72.6" width="0.9" height="22.6" fill="#fff"/><rect x="340.2" y="72.6" width="1" height="22.6" fill="#5c5c5c"/><rect x="341.2" y="72.6" width="0.9" height="22.6" fill="#fff"/><g transform="translate(1 1)" opacity="0.42" style="filter:brightness(0)"><path d="M166.6 76.2L173.6 86.4M174.2 76.2L167.2 86.4" stroke="#000" stroke-width="1.2" fill="none"/><ellipse cx="167.4" cy="88" rx="1.7" ry="2" fill="none" stroke="#000" stroke-width="1.1"/><ellipse cx="173.6" cy="88" rx="1.7" ry="2" fill="none" stroke="#000" stroke-width="1.1"/></g><path d="M166.6 76.2L173.6 86.4M174.2 76.2L167.2 86.4" stroke="#000" stroke-width="1.2" fill="none"/><ellipse cx="167.4" cy="88" rx="1.7" ry="2" fill="none" stroke="#000" stroke-width="1.1"/><ellipse cx="173.6" cy="88" rx="1.7" ry="2" fill="none" stroke="#000" stroke-width="1.1"/><g transform="translate(1 1)" opacity="0.42" style="filter:brightness(0)"><rect x="186.4" y="76.8" width="9" height="9.6" fill="#fff" stroke="#000" stroke-width="1.1" stroke-linejoin="miter"/><rect x="188.1" y="79" width="5.6" height="1" fill="#000"/><rect x="188.1" y="81" width="5.6" height="1" fill="#000"/><rect x="188.1" y="83" width="5.6" height="1" fill="#000"/><rect x="188.1" y="85" width="2.2" height="1" fill="#000"/><rect x="191.6" y="79" width="9" height="9.6" fill="#fff" stroke="#000" stroke-width="1.1" stroke-linejoin="miter"/><rect x="193.29999999999998" y="81" width="5.6" height="1" fill="#000"/><rect x="193.29999999999998" y="83" width="5.6" height="1" fill="#000"/><rect x="193.29999999999998" y="85" width="5.6" height="1" fill="#000"/><rect x="193.29999999999998" y="87" width="2.2" height="1" fill="#000"/></g><rect x="186.4" y="76.8" width="9" height="9.6" fill="#fff" stroke="#000" stroke-width="1.1" stroke-linejoin="miter"/><rect x="188.1" y="79" width="5.6" height="1" fill="#000"/><rect x="188.1" y="81" width="5.6" height="1" fill="#000"/><rect x="188.1" y="83" width="5.6" height="1" fill="#000"/><rect x="188.1" y="85" width="2.2" height="1" fill="#000"/><rect x="191.6" y="79" width="9" height="9.6" fill="#fff" stroke="#000" stroke-width="1.1" stroke-linejoin="miter"/><rect x="193.29999999999998" y="81" width="5.6" height="1" fill="#000"/><rect x="193.29999999999998" y="83" width="5.6" height="1" fill="#000"/><rect x="193.29999999999998" y="85" width="5.6" height="1" fill="#000"/><rect x="193.29999999999998" y="87" width="2.2" height="1" fill="#000"/><g transform="translate(1 1)" opacity="0.42" style="filter:brightness(0)"><rect x="207.4" y="77.2" width="11.6" height="11.4" rx="0.8" fill="#b4b4b4" stroke="#000" stroke-width="1.1" stroke-linejoin="miter"/><rect x="209.2" y="77.2" width="1.4" height="11" fill="#e8e8e8"/><rect x="211" y="75.2" width="4.2" height="2.8" fill="#1010e0" stroke="#000" stroke-width="0.7"/><rect x="212.8" y="80.4" width="8.8" height="9.8" fill="#fff" stroke="#000" stroke-width="1.1" stroke-linejoin="miter"/><rect x="214.5" y="83" width="5.4" height="1" fill="#000"/><rect x="214.5" y="85" width="5.4" height="1" fill="#000"/><rect x="214.5" y="87" width="5.4" height="1" fill="#000"/><rect x="214.5" y="89" width="2.2" height="1" fill="#000"/></g><rect x="207.4" y="77.2" width="11.6" height="11.4" rx="0.8" fill="#b4b4b4" stroke="#000" stroke-width="1.1" stroke-linejoin="miter"/><rect x="209.2" y="77.2" width="1.4" height="11" fill="#e8e8e8"/><rect x="211" y="75.2" width="4.2" height="2.8" fill="#1010e0" stroke="#000" stroke-width="0.7"/><rect x="212.8" y="80.4" width="8.8" height="9.8" fill="#fff" stroke="#000" stroke-width="1.1" stroke-linejoin="miter"/><rect x="214.5" y="83" width="5.4" height="1" fill="#000"/><rect x="214.5" y="85" width="5.4" height="1" fill="#000"/><rect x="214.5" y="87" width="5.4" height="1" fill="#000"/><rect x="214.5" y="89" width="2.2" height="1" fill="#000"/><g transform="translate(1 1)" opacity="0.42" style="filter:brightness(0)"><path d="M230.4 75.8H238.0L240.8 78.6V89.2H230.4Z" fill="#fff" stroke="#000" stroke-width="1.1" stroke-linejoin="miter"/><path d="M238.0 75.8V78.6H240.8" fill="none" stroke="#000" stroke-width="0.8"/><path d="M240.6 85.8L244.2 89" stroke="#000" stroke-width="2" stroke-linecap="round"/><circle cx="238.6" cy="83.9" r="3.1" fill="#cfe0f4" stroke="#7a8a9a" stroke-width="0.9"/></g><path d="M230.4 75.8H238.0L240.8 78.6V89.2H230.4Z" fill="#fff" stroke="#000" stroke-width="1.1" stroke-linejoin="miter"/><path d="M238.0 75.8V78.6H240.8" fill="none" stroke="#000" stroke-width="0.8"/><path d="M240.6 85.8L244.2 89" stroke="#000" stroke-width="2" stroke-linecap="round"/><circle cx="238.6" cy="83.9" r="3.1" fill="#cfe0f4" stroke="#7a8a9a" stroke-width="0.9"/><g transform="translate(1 1)" opacity="0.42" style="filter:brightness(0)"><path d="M252.4 75.8H260.0L262.8 78.6V89.2H252.4Z" fill="#fff" stroke="#000" stroke-width="1.1" stroke-linejoin="miter"/><path d="M260.0 75.8V78.6H262.8" fill="none" stroke="#000" stroke-width="0.8"/><rect x="251" y="82" width="8" height="1.6" fill="#d0d0d0"/></g><path d="M252.4 75.8H260.0L262.8 78.6V89.2H252.4Z" fill="#fff" stroke="#000" stroke-width="1.1" stroke-linejoin="miter"/><path d="M260.0 75.8V78.6H262.8" fill="none" stroke="#000" stroke-width="0.8"/><rect x="251" y="82" width="8" height="1.6" fill="#d0d0d0"/><text x="251" y="82.6" font-family="'Liberation Serif',serif" font-weight="bold" font-size="9.6" fill="#000" stroke="#000" stroke-width="0.5">A</text><text x="261.6" y="89.6" font-family="'Liberation Sans',sans-serif" font-weight="bold" font-size="7.6" fill="#000" stroke="#000" stroke-width="0.3">B</text><path d="M254.4 84.2L256.4 87.2H260.4M258.6 85.2L260.8 87.2L258.6 89.2" stroke="#f01020" stroke-width="1.3" fill="none"/><g transform="translate(1 1)" opacity="0.42" style="filter:brightness(0)"><path d="M274.4 75.8H282.0L284.79999999999995 78.6V89.2H274.4Z" fill="#fff" stroke="#000" stroke-width="1.1" stroke-linejoin="miter"/><path d="M282.0 75.8V78.6H284.79999999999995" fill="none" stroke="#000" stroke-width="0.8"/><path d="M284.8 85.8L288.4 88.8" stroke="#000" stroke-width="2" stroke-linecap="round"/><circle cx="282.8" cy="83.9" r="3.1" fill="#cfe0f4" stroke="#7a8a9a" stroke-width="0.9"/><path d="M281 82.1L284.6 85.7M284.6 82.1L281 85.7" stroke="#f01010" stroke-width="1.2"/></g><path d="M274.4 75.8H282.0L284.79999999999995 78.6V89.2H274.4Z" fill="#fff" stroke="#000" stroke-width="1.1" stroke-linejoin="miter"/><path d="M282.0 75.8V78.6H284.79999999999995" fill="none" stroke="#000" stroke-width="0.8"/><path d="M284.8 85.8L288.4 88.8" stroke="#000" stroke-width="2" stroke-linecap="round"/><circle cx="282.8" cy="83.9" r="3.1" fill="#cfe0f4" stroke="#7a8a9a" stroke-width="0.9"/><path d="M281 82.1L284.6 85.7M284.6 82.1L281 85.7" stroke="#f01010" stroke-width="1.2"/><g transform="translate(1 1)" opacity="0.42" style="filter:brightness(0)"><path d="M297.4 76.4V81.4H303.4L301.4 79.6C304.4 78 307 80.2 306.4 82.8C305.8 85.6 302 86.2 300.4 84.2L298 85.8C300.8 89.8 308.4 88.8 309.6 83.2C310.6 77.6 304.6 74.2 299.6 77.8Z" fill="#fff" stroke="#000" stroke-width="1.1" stroke-linejoin="miter"/></g><path d="M297.4 76.4V81.4H303.4L301.4 79.6C304.4 78 307 80.2 306.4 82.8C305.8 85.6 302 86.2 300.4 84.2L298 85.8C300.8 89.8 308.4 88.8 309.6 83.2C310.6 77.6 304.6 74.2 299.6 77.8Z" fill="#fff" stroke="#000" stroke-width="1.1" stroke-linejoin="miter"/><g transform="translate(1 1)" opacity="0.42" style="filter:brightness(0)"><g transform="translate(629.4 0) scale(-1 1)"><path d="M297.4 76.4V81.4H303.4L301.4 79.6C304.4 78 307 80.2 306.4 82.8C305.8 85.6 302 86.2 300.4 84.2L298 85.8C300.8 89.8 308.4 88.8 309.6 83.2C310.6 77.6 304.6 74.2 299.6 77.8Z" fill="#fff" stroke="#000" stroke-width="1.1" stroke-linejoin="miter"/></g></g><g transform="translate(629.4 0) scale(-1 1)"><path d="M297.4 76.4V81.4H303.4L301.4 79.6C304.4 78 307 80.2 306.4 82.8C305.8 85.6 302 86.2 300.4 84.2L298 85.8C300.8 89.8 308.4 88.8 309.6 83.2C310.6 77.6 304.6 74.2 299.6 77.8Z" fill="#fff" stroke="#000" stroke-width="1.1" stroke-linejoin="miter"/></g><g transform="translate(1 1)" opacity="0.42" style="filter:brightness(0)"><rect x="346.6" y="76.8" width="14" height="13.6" fill="#dcdcdc" stroke="#000" stroke-width="1.1" stroke-linejoin="miter"/></g><rect x="346.6" y="76.8" width="14" height="13.6" fill="#dcdcdc" stroke="#000" stroke-width="1.1" stroke-linejoin="miter"/><path d="M351 77.4V90M356.2 77.4V90M347.2 80.2H360M347.2 83.6H360M347.2 87H360" stroke="#8c8c8c" stroke-width="1" fill="none"/><path d="M367.6 83.2C367.4 79 372 76.4 376.6 77.2C381.2 78 383.4 81.4 382.8 85.6C382.2 89.6 379.8 92.2 377 91.6C374.4 91 375.6 88.2 373.8 87.2C371.6 86 367.8 87 367.6 83.2Z" fill="#d4874a" stroke="#a05a20" stroke-width="0.6"/><circle cx="369.2" cy="82.2" r="1.5" fill="#10e010"/><circle cx="372.6" cy="79.6" r="1.5" fill="#f4e800"/><circle cx="376.6" cy="78.8" r="1.5" fill="#f01010"/><circle cx="379.6" cy="82.4" r="1.5" fill="#9a20e8"/><circle cx="379.6" cy="86.2" r="1.5" fill="#1010f0"/><circle cx="378.4" cy="89.4" r="1.5" fill="#000"/><path d="M367.4 91.6L373.6 85.4" stroke="#b46a2a" stroke-width="1.2"/><path d="M373.4 85.6L376.6 81.8" stroke="#000" stroke-width="1.6"/><path d="M372.6 86.6L373.6 85.4" stroke="#fff" stroke-width="1.6"/><path d="M392.3 87.5L397.9 82.4" stroke="#000" stroke-width="5.4" stroke-linecap="round" fill="none"/><path d="M392.3 87.5L397.9 82.4" stroke="#fff" stroke-width="3.7" stroke-linecap="round" fill="none"/><path d="M392.3 87.5L397.9 82.4" stroke="#707070" stroke-width="2.2" stroke-linecap="butt" fill="none"/><path d="M392.3 87.5L397.9 82.4" stroke="#d0d0d0" stroke-width="1.5" stroke-linecap="butt" fill="none"/><path d="M392.7 88.8L395.3 86.4" stroke="#20e040" stroke-width="1.1" fill="none"/><path d="M395.5 83.5L401.4 78.2" stroke="#000" stroke-width="5.4" stroke-linecap="round" fill="none"/><path d="M395.5 83.5L401.4 78.2" stroke="#fff" stroke-width="3.7" stroke-linecap="round" fill="none"/><path d="M395.5 83.5L401.4 78.2" stroke="#707070" stroke-width="2.2" stroke-linecap="butt" fill="none"/><path d="M395.5 83.5L401.4 78.2" stroke="#d0d0d0" stroke-width="1.5" stroke-linecap="butt" fill="none"/><path d="M397.6 79.9L400.8 76.9" stroke="#20e040" stroke-width="1.1" fill="none"/><rect x="412.4" y="79.4" width="12" height="10.2" fill="#c8c8c8" stroke="#000" stroke-width="1.1"/><rect x="410.5" y="77.5" width="12" height="9.8" fill="#b4b4b4" stroke="#000" stroke-width="1.1"/><rect x="412" y="79" width="9" height="6.8" fill="none" stroke="#c8c8c8" stroke-width="0.8"/><polygon points="22.3,114.1 17.2,119.2 10.0,119.2 4.9,114.1 4.9,106.9 10.0,101.8 17.2,101.8 22.3,106.9" fill="#ff0000"/><circle cx="13.6" cy="110.5" r="5.3" fill="#fff"/><text x="13.6" y="113.1" text-anchor="middle" font-family="'Liberation Sans',sans-serif" font-weight="bold" font-size="7.3" fill="#000" stroke="#000" stroke-width="0.15" textLength="11.4" lengthAdjust="spacingAndGlyphs">STOP</text><path d="M28.2 108.2L39.6 113.4M28.8 114.6L38.6 106.8" stroke="#000" stroke-width="1.1" fill="none"/><ellipse cx="40.4" cy="106.4" rx="2" ry="1.7" fill="none" stroke="#000" stroke-width="1.1"/><ellipse cx="41" cy="114.2" rx="2" ry="1.7" fill="none" stroke="#000" stroke-width="1.1"/><path d="M27.4 103C32 105.6 31.4 110 33.6 113.2C35 115.4 36.6 117 38.8 117.8" fill="none" stroke="#f01010" stroke-width="1"/><rect x="50.4" y="99.8" width="1" height="22.4" fill="#5c5c5c"/><rect x="51.4" y="99.8" width="0.9" height="22.4" fill="#fff"/><text x="57" y="116.8" font-family="'Liberation Serif',serif" font-style="italic" font-size="18" fill="#000" stroke="#000" stroke-width="0.3">I</text><text x="71.8" y="116.8" font-family="'Liberation Serif',serif" font-weight="bold" font-size="18" fill="#000">B</text><text x="89.6" y="116.9" font-family="'Liberation Sans',sans-serif" font-size="16.8" fill="#000" textLength="9.6" lengthAdjust="spacingAndGlyphs">S</text><rect x="105" y="103" width="18" height="16" fill="#2a3a3a"/><rect x="105.5" y="103.5" width="5.4" height="4.7" fill="#8c2c52"/><rect x="111.4" y="103.5" width="5.4" height="4.7" fill="#3c8c72"/><rect x="117.3" y="103.5" width="5.4" height="4.7" fill="#2292a2"/><rect x="105.5" y="108.7" width="5.4" height="4.7" fill="#e06232"/><rect x="111.4" y="108.7" width="5.4" height="4.7" fill="#84d2a2"/><rect x="117.3" y="108.7" width="5.4" height="4.7" fill="#62c2c2"/><rect x="105.5" y="113.9" width="5.4" height="4.7" fill="#f0d262"/><rect x="111.4" y="113.9" width="5.4" height="4.7" fill="#e8d8a0"/><rect x="117.3" y="113.9" width="5.4" height="4.7" fill="#92d2c2"/><path d="M111 119L112.4 114.2L117.2 107.2L118.6 108.2L116.4 113L116.8 119Z" fill="#d8ac78" stroke="#8a6238" stroke-width="0.4"/><path d="M12.6 749.4H25.6L27.4 751.4V758.6L25.4 760.8H12.6L10.8 758.8V751.4Z" fill="#3a2d55" stroke="#241a38" stroke-width="0.6"/><rect x="14.6" y="750.4" width="6.4" height="8" fill="#eceae6" stroke="#888" stroke-width="0.4"/><path d="M15.6 752.4h4.2M15.6 754.2h4.2M15.6 756h3" stroke="#9a9a9a" stroke-width="0.6"/><path d="M11 759.6L13.4 757.6M27.2 759.6L25 757.6M11.4 750.4L13 752" stroke="#dcd6c4" stroke-width="1.1"/><path d="M16.2 761.2L23.4 754.8" stroke="#7a4a10" stroke-width="3" stroke-linecap="round"/><path d="M16.6 760.6L23.2 754.8" stroke="#f0961e" stroke-width="1.8" stroke-linecap="round"/><rect x="35" y="742.6" width="9" height="22.6" fill="#e6e4e0"/><rect x="35" y="742.6" width="1" height="22.6" fill="#fff"/><rect x="44" y="742.6" width="1" height="23" fill="#000"/><rect x="35" y="765" width="10" height="1" fill="#000"/><rect x="37.6" y="745.0" width="1.4" height="1.4" fill="#8e8c86"/><rect x="36.8" y="744.2" width="1" height="1" fill="#fff"/><rect x="40.800000000000004" y="745.0" width="1.4" height="1.4" fill="#8e8c86"/><rect x="40.0" y="744.2" width="1" height="1" fill="#fff"/><rect x="37.6" y="747.6" width="1.4" height="1.4" fill="#8e8c86"/><rect x="36.8" y="746.8000000000001" width="1" height="1" fill="#fff"/><rect x="40.800000000000004" y="747.6" width="1.4" height="1.4" fill="#8e8c86"/><rect x="40.0" y="746.8000000000001" width="1" height="1" fill="#fff"/><rect x="37.6" y="750.2" width="1.4" height="1.4" fill="#8e8c86"/><rect x="36.8" y="749.4000000000001" width="1" height="1" fill="#fff"/><rect x="40.800000000000004" y="750.2" width="1.4" height="1.4" fill="#8e8c86"/><rect x="40.0" y="749.4000000000001" width="1" height="1" fill="#fff"/><rect x="37.6" y="752.8" width="1.4" height="1.4" fill="#8e8c86"/><rect x="36.8" y="752.0" width="1" height="1" fill="#fff"/><rect x="40.800000000000004" y="752.8" width="1.4" height="1.4" fill="#8e8c86"/><rect x="40.0" y="752.0" width="1" height="1" fill="#fff"/><rect x="37.6" y="755.4" width="1.4" height="1.4" fill="#8e8c86"/><rect x="36.8" y="754.6" width="1" height="1" fill="#fff"/><rect x="40.800000000000004" y="755.4" width="1.4" height="1.4" fill="#8e8c86"/><rect x="40.0" y="754.6" width="1" height="1" fill="#fff"/><rect x="37.6" y="758.0" width="1.4" height="1.4" fill="#8e8c86"/><rect x="36.8" y="757.2" width="1" height="1" fill="#fff"/><rect x="40.800000000000004" y="758.0" width="1.4" height="1.4" fill="#8e8c86"/><rect x="40.0" y="757.2" width="1" height="1" fill="#fff"/><rect x="37.6" y="760.6" width="1.4" height="1.4" fill="#8e8c86"/><rect x="36.8" y="759.8000000000001" width="1" height="1" fill="#fff"/><rect x="40.800000000000004" y="760.6" width="1.4" height="1.4" fill="#8e8c86"/><rect x="40.0" y="759.8000000000001" width="1" height="1" fill="#fff"/><rect x="37.6" y="763.2" width="1.4" height="1.4" fill="#8e8c86"/><rect x="36.8" y="762.4000000000001" width="1" height="1" fill="#fff"/><rect x="40.800000000000004" y="763.2" width="1.4" height="1.4" fill="#8e8c86"/><rect x="40.0" y="762.4000000000001" width="1" height="1" fill="#fff"/><defs><linearGradient id="fi" x1="0" y1="0" x2="1" y2="1"><stop offset="0" stop-color="#fff"/><stop offset="0.5" stop-color="#f4f4f2"/><stop offset="1" stop-color="#c2c0ba"/></linearGradient></defs><path d="M50.6 747H60.8L64 750V761.2H50.6Z" fill="url(#fi)" stroke="#33322e" stroke-width="1"/><path d="M60.8 747V750H64" fill="none" stroke="#33322e" stroke-width="0.7"/><g transform="translate(125.6 747)"><rect x="0" y="0" width="14" height="14" fill="#d4d3d0"/><g style="filter:blur(0.45px)"><circle cx="7" cy="8" r="4.6" fill="#e6e2dc"/><circle cx="10" cy="3.6" r="1.6" fill="#d8b090"/><circle cx="9.6" cy="10.6" r="1.5" fill="#c89468"/><circle cx="6.6" cy="6.2" r="1.2" fill="#8a8ae8"/><g font-family="'Liberation Serif',serif" font-weight="bold" fill="#3c3c3c"><text x="0.6" y="7.4" font-size="7">T</text><text x="3.8" y="10.8" font-size="7">E</text><text x="7.8" y="7.4" font-size="7">X</text></g></g></g><rect x="910.4" y="743" width="112.2" height="23.2" fill="#fff"/><rect x="1021.4" y="743" width="1.2" height="23.2" fill="#e4e2dc"/><rect x="910.4" y="765" width="112" height="1.2" fill="#e4e2dc"/><rect x="910.4" y="743" width="109" height="19.6" fill="#55534e"/><rect x="911.4" y="744" width="107.6" height="18.2" fill="#000"/><rect x="912.6" y="745" width="24.8" height="16.2" fill="#dddbd6"/><rect x="912.6" y="745" width="24.8" height="1" fill="#a39d92"/><rect x="912.6" y="746" width="24.8" height="0.8" fill="#000"/><rect x="934.6" y="746" width="1" height="8.6" fill="#000"/><rect x="935.8" y="746.6" width="0.9" height="7.4" fill="#e8e6e0"/><rect x="934.8" y="754" width="2" height="0.8" fill="#000"/><rect x="939.4" y="745" width="25.2" height="16.2" fill="#dddbd6"/><rect x="939.4" y="745" width="25.2" height="1" fill="#a39d92"/><rect x="939.4" y="746" width="25.2" height="0.8" fill="#000"/><rect x="961.8000000000001" y="746" width="1" height="8.6" fill="#000"/><rect x="963.0" y="746.6" width="0.9" height="7.4" fill="#e8e6e0"/><rect x="962.0" y="754" width="2" height="0.8" fill="#000"/><rect x="966.6" y="745" width="25.2" height="16.2" fill="#dddbd6"/><rect x="966.6" y="744.2" width="25.2" height="1.4" fill="#1c2c40"/><rect x="966.6" y="761" width="25.2" height="1.3" fill="#1c2c40"/><rect x="993.8" y="745" width="23.4" height="16.2" fill="#dddbd6"/><rect x="993.8" y="745" width="23.4" height="1" fill="#a39d92"/><rect x="993.8" y="746" width="23.4" height="0.8" fill="#000"/><rect x="1014.4" y="746" width="1" height="8.6" fill="#000"/><rect x="1015.5999999999999" y="746.6" width="0.9" height="7.4" fill="#e8e6e0"/><rect x="1014.5999999999999" y="754" width="2" height="0.8" fill="#000"/><rect x="998.4" y="754.4" width="12.4" height="2.2" fill="#f4f2ee" stroke="#000" stroke-width="0.9"/><rect x="0" y="767" width="1024" height="1" fill="#000"/><rect x="1023" y="741" width="1" height="27" fill="#000"/><rect x="0" y="741" width="1" height="26" fill="#fff"/></svg>
</div></body></html>
